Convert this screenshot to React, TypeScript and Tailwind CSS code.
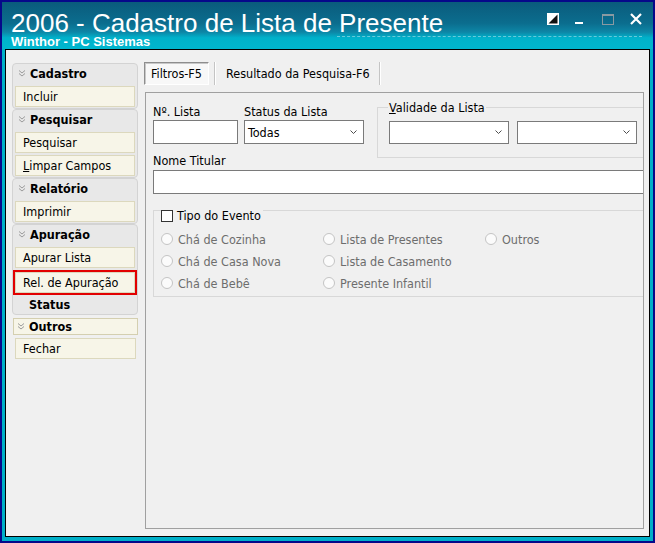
import React from 'react';

const ui = "font-['DejaVu_Sans_Condensed','DejaVu_Sans',sans-serif] text-[12.5px] leading-[15px] text-black";

const Chevron = () => (
  <svg width="8" height="7" viewBox="0 0 8 7" className="shrink-0">
    <path d="M1 0.5 L4 3 L7 0.5 M1 3.5 L4 6 L7 3.5" stroke="#9b9b9b" fill="none" strokeWidth="1" />
  </svg>
);

const SelectArrow = () => (
  <svg width="7" height="5" viewBox="0 0 7 5">
    <path d="M0.5 0.5 L3.5 3.5 L6.5 0.5" stroke="#4d4d4d" fill="none" strokeWidth="1" />
  </svg>
);

type ItemProps = { children: React.ReactNode; highlight?: boolean };

const Item = ({ children, highlight }: ItemProps) => (
  <div
    className={
      highlight
        ? 'h-[21px] mt-[2px] flex items-center pl-[7px] bg-[#f7f5e8] border border-[#dcd8bd] ring-2 ring-[#e20000]'
        : 'h-[21px] flex items-center pl-[7px] bg-[#f7f5e8] border border-[#dcd8bd]'
    }
  >
    {children}
  </div>
);

type GroupProps = { title: string; children: React.ReactNode; footer?: string };

const Group = ({ title, children, footer }: GroupProps) => (
  <div className="w-[126px] rounded-[4px] border border-[#d3d3d3] bg-[#e8e8e8] pb-[1px]">
    <div className="h-[22px] flex items-center pl-[5px] pb-[3px] gap-[4px] font-bold">
      <Chevron />
      <span>{title}</span>
    </div>
    <div className="px-[2px] flex flex-col gap-[2px]">{children}</div>
    {footer && <div className="h-[18px] mt-[2px] flex items-center pl-[16px] font-bold">{footer}</div>}
  </div>
);

const Input = ({ className }: { className: string }) => (
  <div className={'h-[24px] border border-[#7a7a7a] bg-white ' + className} />
);

const Select = ({ value, className }: { value?: string; className: string }) => (
  <div className={'w-[120px] flex items-center justify-between border border-[#7a7a7a] bg-white pl-[3px] pr-[6px] ' + className}>
    <span>{value}</span>
    <SelectArrow />
  </div>
);

const Radio = ({ label }: { label: string }) => (
  <div className="h-[22px] flex items-center gap-[5px] text-[#6d6d6d]">
    <span className="w-[12px] h-[12px] rounded-full border border-[#c4c4c4] bg-[#fbfbfb]" />
    <span>{label}</span>
  </div>
);

export default function App() {
  return (
    <div className="w-[655px] h-[543px] bg-[#06088a] p-[2px]">
      <div className="w-full h-full flex flex-col bg-[#00afc8]">
        {/* title bar */}
        <div className="relative h-[47px] shrink-0 flex justify-between bg-[linear-gradient(180deg,#0a5b7c_0%,#0b6d8e_45%,#0d86a6_64%,#00b1ca_76%,#00b6ce_100%)] text-white font-['Liberation_Sans',Arial,sans-serif]">
          <div className="pl-[9px] pt-[9px]">
            <div className="text-[26px] leading-[24px] whitespace-nowrap">2006 - Cadastro de Lista de Presente</div>
            <div className="text-[13px] leading-[13px] font-bold whitespace-nowrap">Winthor - PC Sistemas</div>
          </div>
          <div className="absolute left-[335px] top-[34px] w-[305px] border-t border-dashed border-white/40" />
          <div className="flex items-start pt-[11px] pr-[11px]">
            <svg width="12" height="12" viewBox="0 0 12 12">
              <rect x="0" y="0" width="12" height="12" fill="#ffffff" />
              <polygon points="10.5,1.5 10.5,10.5 1.5,10.5" fill="#111111" />
            </svg>
            <svg width="8" height="12" viewBox="0 0 8 12" className="ml-[16px]">
              <rect x="0" y="9" width="8" height="2" fill="#ffffff" />
            </svg>
            <svg width="12" height="11" viewBox="0 0 12 11" className="ml-[19px] mt-[1px]">
              <rect x="0.5" y="0.5" width="11" height="10" fill="none" stroke="#8a9aa2" />
              <rect x="0" y="0" width="12" height="2" fill="#8a9aa2" />
            </svg>
            <svg width="12" height="12" viewBox="0 0 12 12" className="ml-[16px]">
              <path d="M1 1 L11 11 M11 1 L1 11" stroke="#ffffff" strokeWidth="2.2" />
            </svg>
          </div>
        </div>

        {/* body */}
        <div className="flex-1 min-h-0 px-[3px] pb-[4px] flex">
          <div className={'flex-1 min-w-0 flex border border-black bg-[#f0f0f0] ' + ui}>
            {/* left menu */}
            <div className="w-[138px] shrink-0 pl-[6px] pt-[13px] flex flex-col">
              <Group title="Cadastro">
                <Item>Incluir</Item>
              </Group>
              <Group title="Pesquisar">
                <Item>Pesquisar</Item>
                <Item>
                  <span><u>L</u>impar Campos</span>
                </Item>
              </Group>
              <Group title="Relatório">
                <Item>Imprimir</Item>
              </Group>
              <Group title="Apuração" footer="Status">
                <Item>Apurar Lista</Item>
                <Item highlight>Rel. de Apuração</Item>
              </Group>
              <div className="w-[125px] ml-[1px] mt-[3px] h-[17px] flex items-center gap-[4px] pl-[3px] font-bold bg-[#f7f5e8] border border-[#d4cfb0]">
                <Chevron />
                <span>Outros</span>
              </div>
              <div className="w-[121px] ml-[3px] mt-[3px] h-[21px] flex items-center pl-[7px] bg-[#f7f5e8] border border-[#dcd8bd]">
                Fechar
              </div>
            </div>

            {/* main */}
            <div className="flex-1 min-w-0 flex flex-col pt-[12px] pr-[5px] pb-[7px]">
              <div className="h-[23px] flex items-stretch">
                <div className="px-[6px] flex items-center bg-[#f8f8f8] border border-t-[#8e8e8e] border-l-[#8e8e8e] border-b-[#ffffff] border-r-[#ffffff] shadow-[inset_1px_1px_0_#c8c8c8]">
                  Filtros-F5
                </div>
                <div className="ml-[5px] w-[1px] bg-[#c4c4c4]" />
                <div className="w-[1px] bg-white" />
                <div className="pl-[10px] pr-[9px] flex items-center whitespace-nowrap">Resultado da Pesquisa-F6</div>
                <div className="w-[1px] bg-[#c4c4c4]" />
                <div className="w-[1px] bg-white" />
              </div>

              <div className="flex-1 min-w-0 mt-[7px] ml-[1px] border border-[#a0a0a0] overflow-hidden">
                <div className="w-[520px] pl-[7px] pt-[11px]">
                  <div className="flex items-start">
                    <div className="w-[85px] shrink-0">
                      <div className="h-[15px]">Nº. Lista</div>
                      <Input className="mt-[1px] w-[85px]" />
                    </div>
                    <div className="ml-[6px] w-[120px] shrink-0">
                      <div className="h-[15px] whitespace-nowrap">Status da Lista</div>
                      <Select value="Todas" className="mt-[1px] h-[24px]" />
                    </div>
                    <fieldset className="ml-[13px] -mt-[4px] -mb-[14px] w-[268px] shrink-0 border border-[#d8d8d8] pl-[11px] pb-[13px]">
                      <legend className="leading-[15px] px-[1px] -ml-[1px]">
                        <u>V</u>alidade da Lista
                      </legend>
                      <div className="mt-[6px] flex gap-[8px]">
                        <Select className="h-[23px]" />
                        <Select className="h-[23px]" />
                      </div>
                    </fieldset>
                  </div>

                  <div className="mt-[9px] h-[15px]">Nome Titular</div>
                  <Input className="mt-[2px] w-[495px]" />

                  <fieldset className="mt-[12px] w-[492px] border border-[#d8d8d8] pl-[7px] pb-[2px]">
                    <legend className="h-[8px] pr-[2px]">
                      <div className="mt-[2px] flex items-center gap-[4px]">
                        <span className="w-[12px] h-[12px] border border-[#333333] bg-white" />
                        <span>Tipo do Evento</span>
                      </div>
                    </legend>
                    <div className="mt-[14px] grid grid-cols-[162px_162px_162px]">
                      <Radio label="Chá de Cozinha" />
                      <Radio label="Lista de Presentes" />
                      <Radio label="Outros" />
                      <Radio label="Chá de Casa Nova" />
                      <Radio label="Lista de Casamento" />
                      <div />
                      <Radio label="Chá de Bebê" />
                      <Radio label="Presente Infantil" />
                    </div>
                  </fieldset>
                </div>
              </div>
            </div>
          </div>
        </div>
      </div>
    </div>
  );
}
